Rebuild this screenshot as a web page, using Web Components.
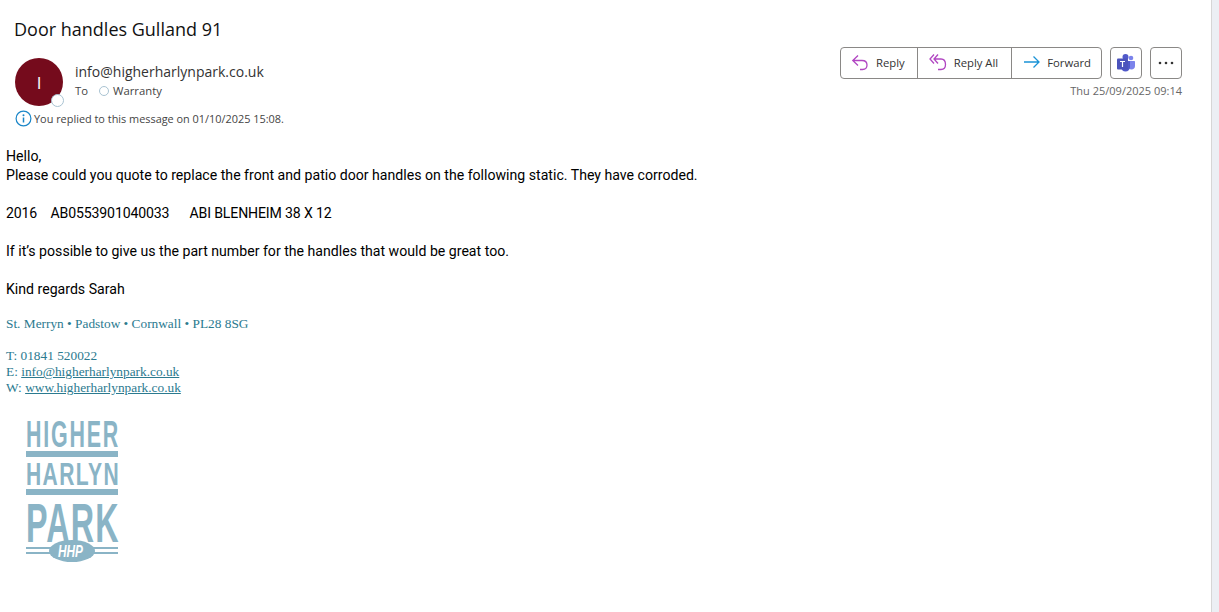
<!DOCTYPE html>
<html lang="en">
<head>
<meta charset="utf-8">
<title>Door handles Gulland 91</title>
<style>
  html, body { margin: 0; height: 100%; background: #fff; overflow: hidden; }
  body { font-family: "Open Sans", "Noto Sans", sans-serif; color: #000; }
  mail-page { height: 612px; }
</style>
</head>
<body>
<mail-page>
  <mail-header subject="Door handles Gulland 91" sender="info@higherharlynpark.co.uk" initial="I" recipient="Warranty" sent="Thu 25/09/2025 09:14" notice="You replied to this message on 01/10/2025 15:08."></mail-header>
  <mail-body>
    <p>Hello,<br>Please could you quote to replace the front and patio door handles on the following static. They have corroded.</p>
    <p style="letter-spacing: -.15px">2016&nbsp;&nbsp;&nbsp;&nbsp;AB0553901040033&nbsp;&nbsp;&nbsp;&nbsp;&nbsp;&nbsp;ABI BLENHEIM 38 X 12</p>
    <p>If it’s possible to give us the part number for the handles that would be great too.</p>
    <p>Kind regards Sarah</p>
  </mail-body>
  <mail-signature></mail-signature>
</mail-page>

<script>
const pageTemplate = document.createElement('template');
pageTemplate.innerHTML = `
<style>
  :host { display: flex; }
  .content { flex: 1; min-width: 0; }
  .track { width: 7px; background: #eceff4; border-left: 1px solid #d6d6d6; }
</style>
<div class="content"><slot></slot></div>
<div class="track"></div>
`;

class MailPage extends HTMLElement {
  constructor() {
    super();
    this.attachShadow({mode: 'open'});
    this.shadowRoot.appendChild(pageTemplate.content.cloneNode(true));
  }
}

const headerTemplate = document.createElement('template');
headerTemplate.innerHTML = `
<style>
  :host { display: block; height: 147px; font-family: "Open Sans", sans-serif; }
  .subject { padding: 17px 0 0 14px; height: 24px; font-size: 18px; line-height: 24px; color: #111; }
  .row { display: flex; justify-content: space-between; padding: 17px 29px 0 15px; }
  .who { display: flex; gap: 12px; }
  .avatar { position: relative; width: 48px; height: 48px; border-radius: 50%; background: #750b1c; color: #fff; display: flex; align-items: center; justify-content: center; font-size: 17px; }
  .presence { position: absolute; right: -1px; bottom: -1px; width: 11px; height: 11px; border-radius: 50%; background: #fff; border: 1px solid #a9c3d2; }
  .sender { margin-top: 4px; font-size: 14px; line-height: 20px; color: #333; }
  .to { display: flex; align-items: center; font-size: 11.3px; line-height: 18px; color: #444; }
  .dot { width: 8px; height: 8px; border-radius: 50%; border: 1px solid #a9c3d2; margin: 0 4px 0 11px; }
  .side { display: flex; flex-direction: column; align-items: flex-end; margin-top: -11px; }
  .actions { display: flex; gap: 8px; }
  .group { display: flex; height: 30px; border: 1px solid #8a8886; border-radius: 4px; }
  .btn { display: flex; align-items: center; gap: 7px; padding: 0 11px 2px; font-size: 11.3px; color: #333; border-left: 1px solid #8a8886; }
  .btn:nth-child(1) { border-left: 0; padding-left: 10px; padding-right: 12px; }
  .btn:nth-child(2) { padding-right: 13px; }
  .btn:nth-child(3) { padding-right: 10px; }
  .square { width: 30px; height: 30px; border: 1px solid #8a8886; border-radius: 4px; display: flex; align-items: center; justify-content: center; }
  .sent { margin-top: 4px; font-size: 11px; line-height: 16px; color: #666; }
  .notice { display: flex; align-items: center; gap: 2px; padding-left: 15px; margin-top: 4px; font-size: 10.9px; line-height: 17px; color: #444; }
  svg { display: block; }
</style>
<div class="subject"></div>
<div class="row">
  <div class="who">
    <div class="avatar"><span class="initial"></span><span class="presence"></span></div>
    <div>
      <div class="sender"></div>
      <div class="to">To<span class="dot"></span><span class="recipient"></span></div>
    </div>
  </div>
  <div class="side">
    <div class="actions">
      <div class="group">
        <div class="btn">
          <svg width="18" height="18" viewBox="0 0 18 18" fill="none" stroke="#b146c2" stroke-width="1.300"><path d="M7 2.500 1.800 7.500 7 12.500M2 7.500h9c3 0 5 1.700 5 4.500s-2 4.500-4.500 4.500H9"/></svg>
          Reply
        </div>
        <div class="btn">
          <svg width="18" height="18" viewBox="0 0 18 18" fill="none" stroke="#b146c2" stroke-width="1.300"><path d="M5 1.500 1 6l4 4.500M9 1.500 5 6l4 4.500M5.500 6H12c3 0 4.500 2 4.500 5.500s-2 5-4.500 5H9"/></svg>
          Reply All
        </div>
        <div class="btn">
          <svg width="17" height="18" viewBox="0 0 17 18" fill="none" stroke="#1a93d6" stroke-width="1.300"><path d="M1 9h15M10.500 3.500 16 9l-5.500 5.500"/></svg>
          Forward
        </div>
      </div>
      <div class="square">
        <svg width="20" height="18" viewBox="0 0 20 18"><circle cx="15" cy="4" r="2.300" fill="#7b83eb"/><path d="M11 7h7c.6 0 1 .4 1 1v4c0 2-1.500 3.500-3.500 3.500S12 14 11 12z" fill="#7b83eb"/><circle cx="9.500" cy="3" r="3" fill="#5059c9"/><path d="M5 7h9v6c0 2.500-2 4.500-4.500 4.500S5 15.500 5 13z" fill="#5059c9"/><rect x="1" y="4.500" width="11" height="11" rx="1" fill="#4b53bc"/><path d="M4 7.500h5M6.500 7.500v5.500" stroke="#fff" stroke-width="1.200" fill="none"/></svg>
      </div>
      <div class="square">
        <svg width="16" height="4" viewBox="0 0 16 4" fill="#333"><circle cx="2" cy="2" r="1.300"/><circle cx="8" cy="2" r="1.300"/><circle cx="14" cy="2" r="1.300"/></svg>
      </div>
    </div>
    <div class="sent"></div>
  </div>
</div>
<div class="notice">
  <svg width="17" height="17" viewBox="0 0 17 17"><circle cx="8.500" cy="8.500" r="7.400" fill="none" stroke="#1a86c8" stroke-width="1.200"/><circle cx="8.500" cy="5.200" r="1" fill="#1a86c8"/><path d="M8.500 7.500v5" stroke="#1a86c8" stroke-width="1.500"/></svg>
  <span class="note"></span>
</div>
`;

class MailHeader extends HTMLElement {
  constructor() {
    super();
    this.attachShadow({mode: 'open'});
    this.shadowRoot.appendChild(headerTemplate.content.cloneNode(true));
    const root = this.shadowRoot;
    root.querySelector('.subject').textContent = this.getAttribute('subject');
    root.querySelector('.sender').textContent = this.getAttribute('sender');
    root.querySelector('.initial').textContent = this.getAttribute('initial');
    root.querySelector('.recipient').textContent = this.getAttribute('recipient');
    root.querySelector('.sent').textContent = this.getAttribute('sent');
    root.querySelector('.note').textContent = this.getAttribute('notice');
  }
}

const bodyTemplate = document.createElement('template');
bodyTemplate.innerHTML = `
<style>
  :host { display: block; padding-left: 6px; font-family: Roboto, sans-serif; font-size: 14.11px; line-height: 19px; color: #000; }
  ::slotted(p) { margin: 0 0 19px; }
</style>
<slot></slot>
`;

class MailBody extends HTMLElement {
  constructor() {
    super();
    this.attachShadow({mode: 'open'});
    this.shadowRoot.appendChild(bodyTemplate.content.cloneNode(true));
  }
}

const signatureTemplate = document.createElement('template');
signatureTemplate.innerHTML = `
<style>
  :host { display: block; padding-left: 6px; margin-top: -2px; font-family: "Liberation Serif", serif; font-size: 13.33px; line-height: 16px; color: #2b7a8f; }
  a { color: inherit; }
  p { margin: 0 0 16px; }
  .logo { display: block; margin: 21px 0 0 19px; overflow: visible; }
  text { font-family: "Liberation Sans Narrow", "Liberation Sans", sans-serif; font-weight: 700; fill: #8ab4c6; }
</style>
<p>St. Merryn • Padstow • Cornwall • PL28 8SG</p>
<div>T: 01841 520022</div>
<div>E: <a href="#">info@higherharlynpark.co.uk</a></div>
<div>W: <a href="#">www.higherharlynpark.co.uk</a></div>
<svg class="logo" width="96" height="150" viewBox="0 0 96 150">
  <text transform="translate(1 30) scale(.595 1)" font-size="36" letter-spacing="3">HIGHER</text>
  <rect x="1" y="34" width="92" height="6" fill="#8ab4c6"/>
  <text transform="translate(1 68) scale(.68 1)" font-size="31" letter-spacing="2">HARLYN</text>
  <rect x="1" y="72" width="92" height="6" fill="#8ab4c6"/>
  <text transform="translate(1 125) scale(.587 1)" font-size="55" letter-spacing="2">PARK</text>
  <path d="M1 131h26M1 136h26M67 131h26M67 136h26" stroke="#8ab4c6" stroke-width="2"/>
  <ellipse cx="47" cy="134" rx="23" ry="11" fill="#8ab4c6"/>
  <text transform="translate(33 140) scale(.74 1)" font-size="16" font-style="italic" style="fill:#fff">HHP</text>
</svg>
`;

class MailSignature extends HTMLElement {
  constructor() {
    super();
    this.attachShadow({mode: 'open'});
    this.shadowRoot.appendChild(signatureTemplate.content.cloneNode(true));
  }
}

customElements.define('mail-page', MailPage);
customElements.define('mail-header', MailHeader);
customElements.define('mail-body', MailBody);
customElements.define('mail-signature', MailSignature);
</script>
</body>
</html>
